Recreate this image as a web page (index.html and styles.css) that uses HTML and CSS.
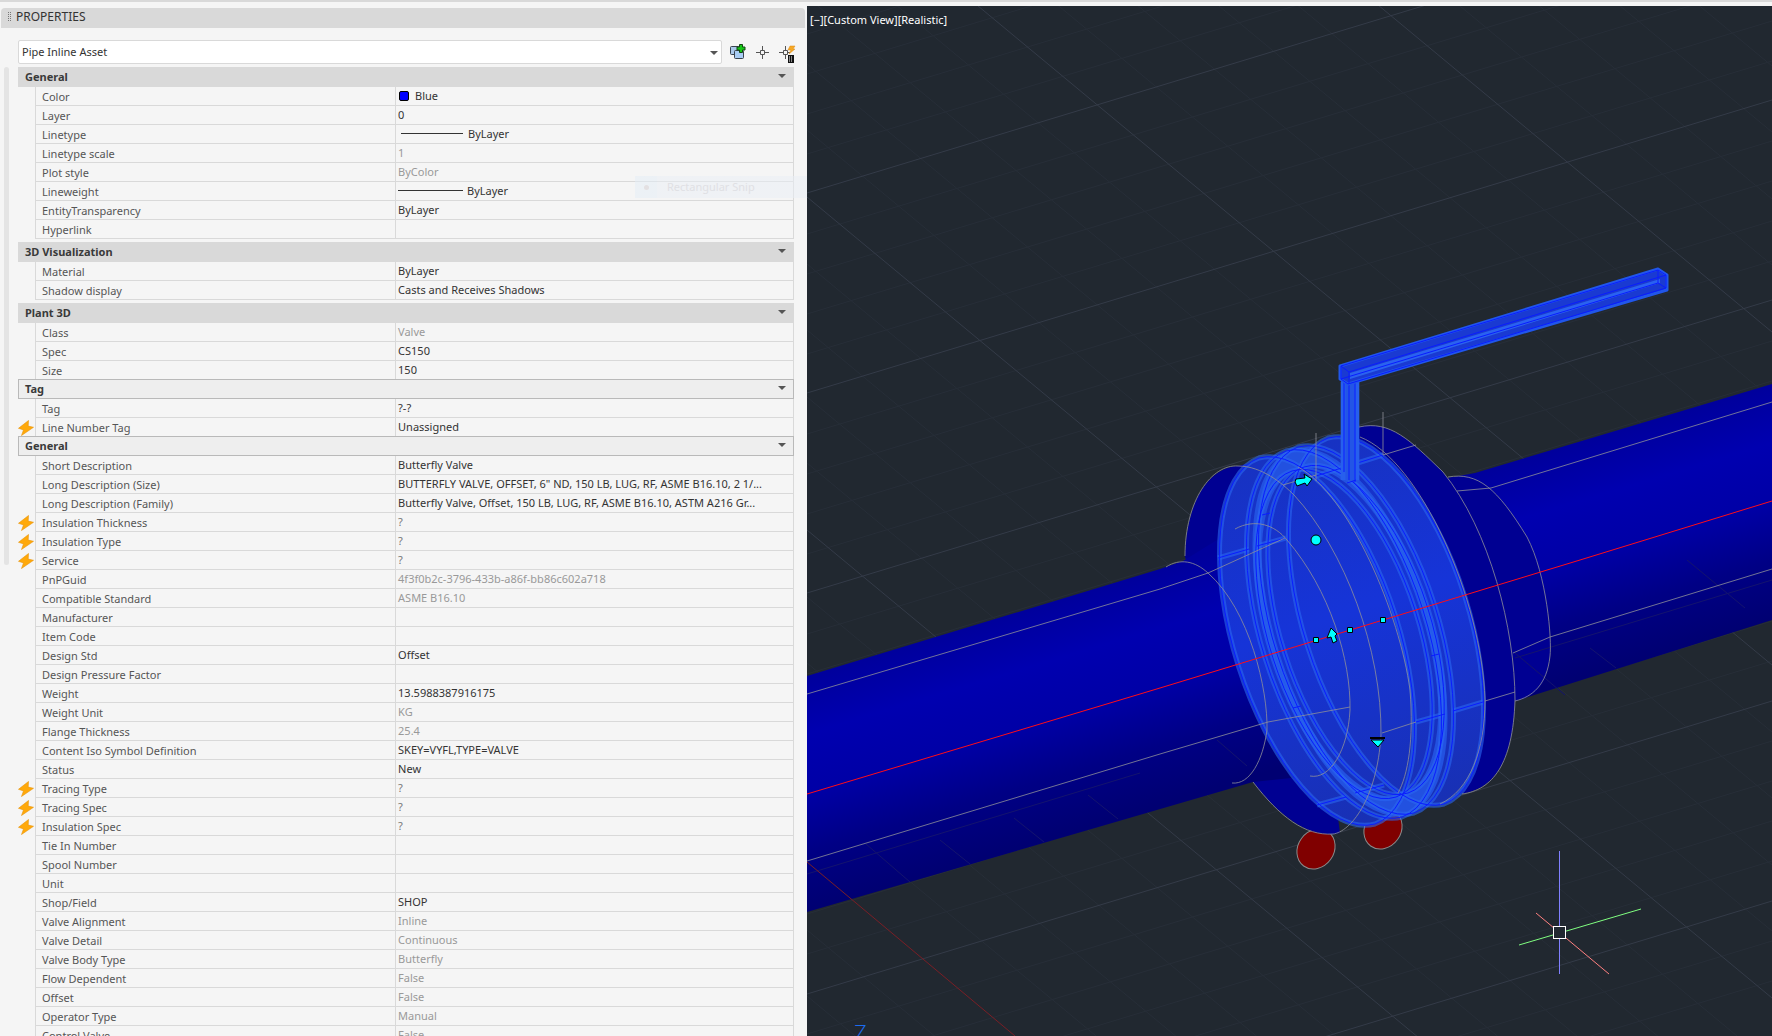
FILE: index.html
```html
<!DOCTYPE html>
<html lang="en">
<head>
<meta charset="utf-8">
<title>Properties</title>
<link rel="stylesheet" href="styles.css">
</head>
<body>
<svg class="defs" aria-hidden="true">
  <symbol id="bolt" viewBox="0 0 16 16"><path d="M10.5 0.5L0.5 8.3l5 1.6-2 5.6L15.5 7.3l-5.3-1.2z" fill="#ffa90a" stroke="#e8940a" stroke-width=".6"/></symbol>
  <symbol id="caret" viewBox="0 0 8 4"><path d="M0 0h8L4 4z" fill="#555"/></symbol>
</svg>
<div class="app">
<aside class="panel">
  <header class="title"><span class="grip"></span><h1>PROPERTIES</h1></header>
  <div class="panel-body">
    <div class="toolbar">
      <label class="picker"><select aria-label="Selected object"><option>Pipe Inline Asset</option></select><svg class="caret"><use href="#caret"/></svg></label>
      <button class="tool" aria-label="Toggle PICKADD"><svg viewBox="0 0 16 18"><rect x=".5" y="3.500" width="9" height="8" rx="1" fill="#a9c8ea" stroke="#39434f"/><rect x="4.500" y="7.500" width="9" height="8" rx="1" fill="#a9cdf5" stroke="#39434f"/><path d="M9.500 1.500h3v2.500H15v3h-2.500v2.500h-3V7H7V4h2.500z" fill="#16c716" stroke="#124512"/></svg></button>
      <button class="tool" aria-label="Select objects"><svg viewBox="0 0 16 18"><path d="M8.500 3v4m0 5v4M2 9.500h4m5 0h4M6.500 7.500h4v4h-4z" fill="none" stroke="#555"/></svg></button>
      <button class="tool" aria-label="Quick select"><svg viewBox="0 0 16 18"><path d="M7.500 3v4m0 5v4M1 9.500h4m5 0h2M5.500 7.500h4v4h-4z" fill="none" stroke="#555"/><path d="M12 3h5l-2 3h2l-6 5 2-4h-3z" fill="#f7a823" stroke="#d98a1a" stroke-width=".5"/><path d="M10 12h6v8h-6z" fill="#111"/><path d="M11 14h4M11 16h4M11 18h4" stroke="#fff" stroke-dasharray="1 1"/></svg></button>
    </div>
    <div class="content">
      <div class="scroll-track"></div>
      <div class="groups">
        <section>
          <button class="head">General<svg class="caret"><use href="#caret"/></svg></button>
          <table>
            <tr><td class="flag"></td><th scope="row">Color</th><td><span class="swatch"></span>Blue</td></tr>
            <tr><td class="flag"></td><th scope="row">Layer</th><td>0</td></tr>
            <tr><td class="flag"></td><th scope="row">Linetype</th><td><span class="rule rule-inset"></span>ByLayer</td></tr>
            <tr><td class="flag"></td><th scope="row">Linetype scale</th><td class="off">1</td></tr>
            <tr><td class="flag"></td><th scope="row">Plot style</th><td class="off">ByColor</td></tr>
            <tr><td class="flag"></td><th scope="row">Lineweight</th><td><span class="rule"></span>ByLayer</td></tr>
            <tr><td class="flag"></td><th scope="row">EntityTransparency</th><td>ByLayer</td></tr>
            <tr><td class="flag"></td><th scope="row">Hyperlink</th><td></td></tr>
          </table>
        </section>
        <section>
          <button class="head">3D Visualization<svg class="caret"><use href="#caret"/></svg></button>
          <table>
            <tr><td class="flag"></td><th scope="row">Material</th><td>ByLayer</td></tr>
            <tr><td class="flag"></td><th scope="row">Shadow display</th><td>Casts and Receives Shadows</td></tr>
          </table>
        </section>
        <section>
          <button class="head">Plant 3D<svg class="caret"><use href="#caret"/></svg></button>
          <table>
            <tr><td class="flag"></td><th scope="row">Class</th><td class="off">Valve</td></tr>
            <tr><td class="flag"></td><th scope="row">Spec</th><td>CS150</td></tr>
            <tr><td class="flag"></td><th scope="row">Size</th><td>150</td></tr>
          </table>
          <button class="head sub">Tag<svg class="caret"><use href="#caret"/></svg></button>
          <table>
            <tr><td class="flag"></td><th scope="row">Tag</th><td>?-?</td></tr>
            <tr><td class="flag"><svg><use href="#bolt"/></svg></td><th scope="row">Line Number Tag</th><td>Unassigned</td></tr>
          </table>
          <button class="head sub">General<svg class="caret"><use href="#caret"/></svg></button>
          <table>
            <tr><td class="flag"></td><th scope="row">Short Description</th><td>Butterfly Valve</td></tr>
            <tr><td class="flag"></td><th scope="row">Long Description (Size)</th><td>BUTTERFLY VALVE, OFFSET, 6" ND, 150 LB, LUG, RF, ASME B16.10, 2 1/...</td></tr>
            <tr><td class="flag"></td><th scope="row">Long Description (Family)</th><td>Butterfly Valve, Offset, 150 LB, LUG, RF, ASME B16.10, ASTM A216 Gr...</td></tr>
            <tr><td class="flag"><svg><use href="#bolt"/></svg></td><th scope="row">Insulation Thickness</th><td class="unset">?</td></tr>
            <tr><td class="flag"><svg><use href="#bolt"/></svg></td><th scope="row">Insulation Type</th><td class="unset">?</td></tr>
            <tr><td class="flag"><svg><use href="#bolt"/></svg></td><th scope="row">Service</th><td class="unset">?</td></tr>
            <tr><td class="flag"></td><th scope="row">PnPGuid</th><td class="off">4f3f0b2c-3796-433b-a86f-bb86c602a718</td></tr>
            <tr><td class="flag"></td><th scope="row">Compatible Standard</th><td class="off">ASME B16.10</td></tr>
            <tr><td class="flag"></td><th scope="row">Manufacturer</th><td></td></tr>
            <tr><td class="flag"></td><th scope="row">Item Code</th><td></td></tr>
            <tr><td class="flag"></td><th scope="row">Design Std</th><td>Offset</td></tr>
            <tr><td class="flag"></td><th scope="row">Design Pressure Factor</th><td></td></tr>
            <tr><td class="flag"></td><th scope="row">Weight</th><td>13.5988387916175</td></tr>
            <tr><td class="flag"></td><th scope="row">Weight Unit</th><td class="off">KG</td></tr>
            <tr><td class="flag"></td><th scope="row">Flange Thickness</th><td class="off">25.4</td></tr>
            <tr><td class="flag"></td><th scope="row">Content Iso Symbol Definition</th><td>SKEY=VYFL,TYPE=VALVE</td></tr>
            <tr><td class="flag"></td><th scope="row">Status</th><td>New</td></tr>
            <tr><td class="flag"><svg><use href="#bolt"/></svg></td><th scope="row">Tracing Type</th><td class="unset">?</td></tr>
            <tr><td class="flag"><svg><use href="#bolt"/></svg></td><th scope="row">Tracing Spec</th><td class="unset">?</td></tr>
            <tr><td class="flag"><svg><use href="#bolt"/></svg></td><th scope="row">Insulation Spec</th><td class="unset">?</td></tr>
            <tr><td class="flag"></td><th scope="row">Tie In Number</th><td></td></tr>
            <tr><td class="flag"></td><th scope="row">Spool Number</th><td></td></tr>
            <tr><td class="flag"></td><th scope="row">Unit</th><td></td></tr>
            <tr><td class="flag"></td><th scope="row">Shop/Field</th><td>SHOP</td></tr>
            <tr><td class="flag"></td><th scope="row">Valve Alignment</th><td class="off">Inline</td></tr>
            <tr><td class="flag"></td><th scope="row">Valve Detail</th><td class="off">Continuous</td></tr>
            <tr><td class="flag"></td><th scope="row">Valve Body Type</th><td class="off">Butterfly</td></tr>
            <tr><td class="flag"></td><th scope="row">Flow Dependent</th><td class="off">False</td></tr>
            <tr><td class="flag"></td><th scope="row">Offset</th><td class="off">False</td></tr>
            <tr><td class="flag"></td><th scope="row">Operator Type</th><td class="off">Manual</td></tr>
            <tr><td class="flag"></td><th scope="row">Control Valve</th><td class="off">False</td></tr>
          </table>
        </section>
      </div>
    </div>
  </div>
  <div class="snip">Rectangular Snip</div>
</aside>
<main class="viewport">
  <p class="view-label">[−][Custom View][Realistic]</p>
  <svg class="scene" viewBox="807 6 965 1030" preserveAspectRatio="xMinYMin slice" role="img" aria-label="Butterfly valve between two flanged pipes">
    <defs>
      <linearGradient id="pipeL" gradientUnits="userSpaceOnUse" x1="1000" y1="617" x2="1065" y2="833"><stop offset="0" stop-color="#00009c"/><stop offset=".25" stop-color="#0000b0"/><stop offset=".5" stop-color="#0000a6"/><stop offset=".75" stop-color="#000085"/><stop offset="1" stop-color="#000072"/></linearGradient>
      <linearGradient id="pipeR" gradientUnits="userSpaceOnUse" x1="1600" y1="436" x2="1665" y2="652"><stop offset="0" stop-color="#00009c"/><stop offset=".25" stop-color="#0000b0"/><stop offset=".5" stop-color="#0000a6"/><stop offset=".75" stop-color="#000085"/><stop offset="1" stop-color="#000072"/></linearGradient>
      <linearGradient id="disc" gradientUnits="userSpaceOnUse" x1="-60" y1="-180" x2="60" y2="180"><stop offset="0" stop-color="#1732c2"/><stop offset=".45" stop-color="#1634d8"/><stop offset="1" stop-color="#1830b4"/></linearGradient>
      <path id="rim" d="M-58 -183A192 84 72.400 0 1 58 183A192 84 72.400 0 1 -58 -183z"/>
      <path id="bore" d="M-52 -163A171 75 72.400 0 1 52 163A171 75 72.400 0 1 -52 -163z"/>
    </defs>
    <g class="grid-minor">
      <path d="M807 34l965-293M807 74l965-293M807 114l965-293M807 154l965-293M807 234l965-293M807 274l965-293M807 314l965-293M807 354l965-293M807 434l965-293M807 474l965-293M807 514l965-293M807 554l965-293M807 634l965-293M807 674l965-293M807 714l965-293M807 754l965-293M807 834l965-293M807 874l965-293M807 914l965-293M807 954l965-293M807 1034l965-293M807 1074l965-293M807 1114l965-293M807 1154l965-293M807 1234l965-293M807 1274l965-293"/>
      <path d="M807 -735l965 801M807 -669l965 801M807 -602l965 801M807 -536l965 801M807 -402l965 801M807 -336l965 801M807 -269l965 801M807 -203l965 801M807 -69l965 801M807 -3l965 801M807 64l965 801M807 130l965 801M807 264l965 801M807 330l965 801M807 397l965 801M807 463l965 801M807 597l965 801M807 663l965 801M807 730l965 801M807 796l965 801M807 930l965 801M807 996l965 801"/>
    </g>
    <path class="grid-major" d="M807 193l965-293M807 393l965-293M807 593l965-293M807 793l965-293M807 994l965-293M807 1194l965-293M807 -469l965 801M807 -136l965 801M807 197l965 801M807 530l965 801"/>

    <g class="bolt-end"><ellipse cx="1316" cy="849" rx="18" ry="21" transform="rotate(36 1316 849)"/><ellipse cx="1383" cy="829" rx="18" ry="21" transform="rotate(36 1383 829)"/></g>

    <path d="M1185 557C1186 500 1210 467 1238 466L1290 453 1340 833C1320 838 1290 830 1253 782L1220 640z" fill="#000092"/>
    <path d="M807 676L1160 569 1183 561 1225 535 1290 560 1320 740 1310 776 1253 782 807 912z" fill="url(#pipeL)"/>
    <path d="M1448 478L1475 473 1772 384V620L1515 701z" fill="url(#pipeR)"/>
    <path d="M1448 478C1478 472 1497 488 1527 537C1547 575 1552 640 1550 656C1547 690 1530 698 1515 701z" fill="#000092"/>
    <path d="M1358 427C1390 420 1410 440 1443 472C1490 530 1515 630 1515 700C1513 765 1492 790 1460 794L1400 800 1330 440z" fill="#000092"/>
    <path class="grid-pipe" d="M807 874L1140 773M866 844l44 38M940 840l30 24M1014 818l30 24M1088 795l30 24M1217 740l30 26M1515 658l257-78M1515 653l50 42M1590 648l26 20M1687 560l58 48"/>
    <path d="M807 862L1015 1036" stroke="#7a1f26" fill="none"/>

    <g fill="url(#disc)">
      <use href="#rim" transform="translate(1317 641)"/>
      <use href="#rim" transform="translate(1386 621)"/>
      <path d="M-47 -184L25 -204 115 164 46 185z" transform="translate(1317 641)"/>
    </g>
    <use class="band" href="#rim" transform="translate(1350 632)"/>
    <use href="#bore" transform="translate(1350 632)" fill="url(#disc)"/>
    <g class="glow">
      <use href="#rim" transform="translate(1317 641)"/><use href="#rim" transform="translate(1386 621)"/>
      <use href="#rim" transform="translate(1344 634)"/><use href="#rim" transform="translate(1356 630)"/>
      <use href="#bore" transform="translate(1344 634)"/><use href="#bore" transform="translate(1356 630)"/>
      <path d="M1218 558L1249 549M1257 546L1286 538M1316 476L1383 455M1416 722L1445 714M1453 711L1483 702M1317 805L1346 797M1355 793L1384 785"/>
    </g>
    <g class="edge">
      <use href="#rim" transform="translate(1317 641)"/><use href="#rim" transform="translate(1386 621)"/>
      <use href="#rim" transform="translate(1344 634)"/><use href="#rim" transform="translate(1356 630)"/>
      <use href="#bore" transform="translate(1344 634)"/><use href="#bore" transform="translate(1356 630)"/>
      <path d="M1218 558L1249 549M1257 546L1286 538M1316 476L1383 455M1416 722L1445 714M1453 711L1483 702M1317 805L1346 797M1355 793L1384 785M1262 515l8-2M1431 656l8-2M1293 708l8-2"/>
    </g>

    <path d="M1341 378h18v104l-18-2z" fill="#2355e6"/>
    <path class="glow" d="M1343 382v98M1357 380v100"/>
    <path class="edge" d="M1344 380v92M1349 382v98M1355 380v102M1347 483l9-3"/>
    <path d="M1340 366L1658 269 1667 275V290L1348 384 1340 379z" fill="#1a3ad2" stroke="#2156ea" stroke-width="3" stroke-linejoin="round"/>
    <path d="M1350 373L1660 279V283L1350 379z" fill="#2a62f0"/>
    <path class="edge" d="M1341 366L1658 270 1666 275V288L1348 384 1341 379zM1341 366L1349 372 1666 275M1349 372V384M1341 379L1658 283V270M1658 283L1666 288"/>

    <g class="wire">
      <path d="M807 694L1160 589 1208 573 1285 538M807 861L1160 754 1268 722 1350 707"/>
      <path d="M1166 567C1180 558 1195 561 1208 573C1250 610 1268 690 1267 730C1263 760 1250 785 1232 783"/>
      <path d="M1185 556C1185 500 1212 464 1238 466C1262 466 1283 484 1294 495C1345 550 1382 650 1381 735C1377 800 1350 832 1333 834C1305 836 1280 817 1253 782"/>
      <path d="M1235 529C1255 518 1275 525 1287 540C1330 590 1351 660 1350 710C1348 750 1330 780 1310 776"/>
      <path d="M1298 467C1350 495 1400 615 1410 690C1414 740 1408 775 1398 793"/>
      <path d="M1359 427C1390 420 1410 440 1443 472C1490 530 1515 630 1515 700C1513 765 1492 790 1462 794"/>
      <path d="M1360 437C1420 460 1482 600 1485 700C1485 750 1470 790 1440 804"/>
      <path d="M1448 477C1478 472 1497 488 1527 537C1547 575 1552 640 1550 656C1547 685 1532 697 1515 701"/>
      <path d="M1772 402L1491 488 1457 491M1772 569L1550 637 1513 653M1316 433v48M1383 412v43L1416 445M1283 485l33-10M1382 733l34-11M1485 701l30-9"/>
    </g>

    <path d="M807 794L1160 688 1580 560 1772 501" stroke="#ff0c18" fill="none"/>
    <g class="handle">
      <circle cx="1316" cy="540" r="5"/>
      <path d="M1313.500 637.500h5v5h-5zM1347.500 627.500h5v5h-5zM1380.500 617.500h5v5h-5z"/>
      <path d="M1296 479l9-1-1-4 8 5-5 7-2-3-8 3-2-4z"/>
      <path d="M1331 628l6 6-2 2 2 5-4 2-2-6-4 1z"/>
      <path d="M1371 740h13l-6 7z"/><path d="M1370 738h15" stroke-width="2"/>
    </g>
    <path d="M1559.500 851v123" stroke="#8080ff"/><path d="M1519 945L1641 909" stroke="#80ff80"/><path d="M1536 913L1609 974" stroke="#ff8080"/>
    <rect x="1553.500" y="926.500" width="12" height="12" fill="#212830" stroke="#fff"/>
    <text x="854" y="1041" class="axis">Z</text>
  </svg>
</main>
</div>
</body>
</html>
```
FILE: styles.css
```css
* { box-sizing: border-box; }
body { margin: 0; background: #f5f5f5; color: #333; font: 11px/18px "Noto Sans", "Open Sans", sans-serif; }
button { font: inherit; color: inherit; border: 0; padding: 0; background: none; }
.defs { position: absolute; width: 0; height: 0; }
.app { display: grid; grid-template-columns: 807fr 965fr; height: 100vh; overflow: hidden; border-top: 2px solid #d9d9d9; }

.panel { position: relative; display: flex; flex-direction: column; min-height: 0; padding: 6px 2px 0 1px; }
.title { display: flex; align-items: center; gap: 5px; height: 20px; padding: 0 0 2px 6px; background: #d9d9d9; border-radius: 4px 4px 0 0; }
.title h1 { margin: 0; font-size: 12px; font-weight: 400; line-height: 18px; }
.grip { width: 4px; height: 10px; background: repeating-conic-gradient(#777 0 25%, #d9d9d9 0 100%) 0 0 / 2px 2px; }
.panel-body { display: flex; flex-direction: column; gap: 3px; min-height: 0; padding: 12px 11px 0 3px; }
.toolbar { display: flex; align-items: center; gap: 8px; padding-left: 14px; height: 24px; }
.picker { position: relative; flex: 1; }
.picker select { appearance: none; display: block; width: 100%; height: 24px; padding: 0 20px 0 3px; border: 1px solid #d9d9d9; border-radius: 2px; background: #fff; color: #333; font: inherit; }
.caret { width: 8px; height: 4px; }
.picker .caret { position: absolute; right: 4px; top: 11px; }
.tool { width: 16px; height: 18px; }
.tool svg { display: block; width: 16px; height: 18px; overflow: visible; }

.content { display: flex; gap: 9px; min-height: 0; height: calc(100vh - 67px); overflow: hidden; }
.scroll-track { flex: none; width: 5px; height: 51.4%; border-radius: 3px; background: #e4e4e4; }
.groups { flex: 1; min-width: 0; }
section { margin-bottom: 3px; }
.head { display: flex; align-items: center; justify-content: space-between; width: 100%; height: 20px; padding: 0 8px 0 7px; background: #d9d9d9; font-weight: 700; color: #3a3a3a; }
.head .caret { margin-bottom: 2px; }
.sub { position: relative; margin-top: -1px; padding: 0 7px 0 6px; background: #eee; border: 1px solid #b9b9b9; }
table { width: 100%; table-layout: fixed; border-spacing: 0; }
th, td { height: 19px; padding: 0; border-bottom: 1px solid #d9d9d9; text-align: left; white-space: nowrap; overflow: hidden; line-height: 18px; }
th { width: 46.4%; padding: 2px 0 0 6px; line-height: 16px; border-left: 1px solid #d9d9d9; font-weight: 400; color: #555; }
td { padding-left: 2px; border-left: 1px solid #d9d9d9; border-right: 1px solid #d9d9d9; }
.flag { width: 17px; padding: 0; border: 0; }
.flag svg { display: block; width: 16px; height: 16px; }
.off { color: #999; }
.unset { color: #777; }
.swatch { display: inline-block; width: 10px; height: 10px; margin: 0 6px 0 1px; border: 1px solid #000; border-radius: 2px; background: #00f; vertical-align: -1px; }
.rule { display: inline-block; width: 65px; height: 1px; margin-right: 4px; background: #333; vertical-align: 4px; }
.rule-inset { width: 62px; margin-left: 3px; margin-right: 5px; }
.snip { position: absolute; left: 635px; right: 0; top: 174px; height: 22px; padding-left: 32px; line-height: 21px; font-size: 11px; background: linear-gradient(90deg, #e3edf680 22px, #e9eef580 22px); color: #dfe0e4; }
.snip::before { content: ""; position: absolute; left: 9px; top: 9px; width: 5px; height: 5px; border-radius: 50%; background: #e3e0e2; }

.viewport { position: relative; margin-top: 4px; overflow: hidden; background: #212830; }
.scene { display: block; width: 100%; height: 100%; }
.view-label { position: absolute; left: 3px; top: 5px; margin: 0; color: #fff; }
.grid-minor { stroke: #272e38; fill: none; }
.grid-major { stroke: #343b48; fill: none; }
.grid-pipe { stroke: #14146e; fill: none; }
.bolt-end { fill: #800000; stroke: #8a8a8a; }
.band { fill: #2251e0; }
.glow { fill: none; stroke: #2a66f2; stroke-width: 5px; stroke-opacity: .6; }
.edge { fill: none; stroke: #0a1cff; stroke-width: 1px; }
.wire { fill: none; stroke: #8f9098; stroke-opacity: .8; }
.handle { fill: #00ffff; stroke: #000; }
.axis { font-family: "Open Sans", sans-serif; font-size: 22px; font-weight: 300; fill: #1c6cf0; }
```
